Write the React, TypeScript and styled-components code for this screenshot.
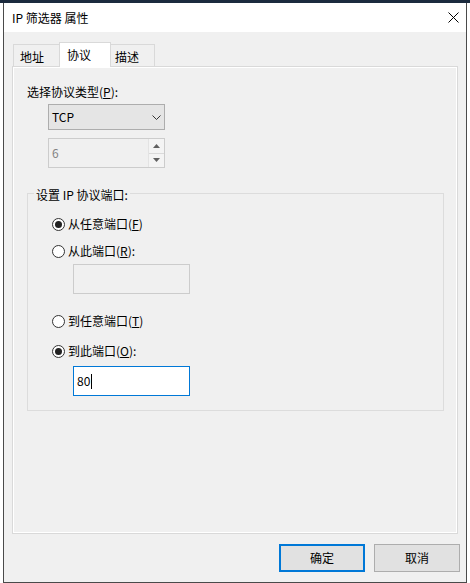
import React from 'react';
import styled, { createGlobalStyle } from 'styled-components';

const GlobalStyle = createGlobalStyle`
	html, body {
		margin: 0;
		padding: 0;
		background: #fff;
	}
	body {
		font-family: "Noto Sans CJK SC", "Noto Sans", sans-serif;
		font-size: 12px;
		color: #000;
	}
	* {
		box-sizing: border-box;
	}
`;

const Desktop = styled.div`
	width: 470px;
	height: 583px;
	overflow: hidden;
	display: flex;
	background: #fff;
	border-top: 3px solid #1b2a3e;
	padding-left: 3px;
`;

const Dialog = styled.div`
	width: 464px;
	height: 580px;
	display: flex;
	flex-direction: column;
	border: 1px solid #4a4a4a;
	border-top: none;
	background: #f0f0f0;
`;

const TitleBar = styled.div`
	height: 29px;
	flex-shrink: 0;
	display: flex;
	align-items: center;
	justify-content: space-between;
	padding-left: 8px;
	background: #fff;
	line-height: 16px;
`;

const CloseButton = styled.div`
	width: 26px;
	height: 29px;
	display: flex;
	align-items: center;
	justify-content: center;
`;

const Body = styled.div`
	flex: 1;
	display: flex;
	flex-direction: column;
	padding: 10px 0 0;
`;

const TabArea = styled.div`
	padding: 0 8px;
	display: flex;
	flex-direction: column;
`;

const TabStrip = styled.div`
	height: 25px;
	margin-bottom: -1px;
	padding-left: 1px;
	display: flex;
	align-items: flex-end;
	position: relative;
	z-index: 1;
`;

const Tab = styled.div<{
	$active?: boolean;
	$width: number;
	$pl: number;
	$hideLeft?: boolean;
	$hideRight?: boolean;
}>`
	width: ${(p) => p.$width}px;
	height: ${(p) => (p.$active ? 25 : 22)}px;
	margin-bottom: ${(p) => (p.$active ? 0 : 1)}px;
	padding-left: ${(p) => p.$pl}px;
	padding-top: ${(p) => (p.$active ? 0 : 2)}px;
	display: flex;
	align-items: center;
	line-height: 16px;
	background: ${(p) => (p.$active ? '#fff' : '#f0f0f0')};
	border: 1px solid #d9d9d9;
	border-bottom: none;
	${(p) => (p.$hideLeft ? 'border-left: none;' : '')}
	${(p) => (p.$hideRight ? 'border-right: none;' : '')}
`;

const Panel = styled.div`
	height: 468px;
	border: 1px solid #d9d9d9;
	box-shadow: inset 0 0 0 1px #fff;
	background: #f0f0f0;
	padding: 17px 13px 0 14px;
	display: flex;
	flex-direction: column;
	align-items: flex-start;
`;

const FieldLabel = styled.div`
	line-height: 16px;
	height: 16px;
`;

const Select = styled.div`
	margin: 4px 0 0 21px;
	width: 117px;
	height: 26px;
	border: 1px solid #adadad;
	background: #e5e5e5;
	display: flex;
	align-items: center;
	justify-content: space-between;
	padding: 0 3px;
	line-height: 16px;
`;

const Spinner = styled.div`
	margin: 8px 0 0 21px;
	width: 117px;
	height: 30px;
	border: 1px solid #cccccc;
	background: #f0f0f0;
	display: flex;
	align-items: stretch;
	justify-content: space-between;
	padding-left: 3px;
	color: #838383;
	line-height: 16px;
`;

const SpinValue = styled.span`
	display: flex;
	align-items: center;
`;

const SpinButtons = styled.div`
	width: 16px;
	display: flex;
	flex-direction: column;
	border-left: 1px solid #e3e3e3;
`;

const SpinButton = styled.div<{ $top?: boolean }>`
	flex: 1;
	display: flex;
	align-items: center;
	justify-content: center;
	background: #f4f4f4;
	${(p) => (p.$top ? 'border-bottom: 1px solid #dadada;' : '')}
`;

const GroupBox = styled.fieldset`
	align-self: stretch;
	margin: 15px 0 0;
	padding: 0 0 14px 0;
	border: 1px solid #dcdcdc;
	min-width: 0;
`;

const Legend = styled.legend`
	margin-left: 6px;
	padding: 4px 2px 0;
	line-height: 16px;
`;

const GroupBody = styled.div`
	margin-top: 13px;
	padding-left: 24px;
	display: flex;
	flex-direction: column;
	align-items: flex-start;
`;

const RadioRow = styled.div<{ $mt: number }>`
	margin-top: ${(p) => p.$mt}px;
	height: 16px;
	display: flex;
	align-items: center;
	gap: 3px;
	line-height: 16px;
`;

const RadioCircle = styled.span<{ $checked?: boolean }>`
	width: 13px;
	height: 13px;
	border: 1px solid #333;
	border-radius: 50%;
	background: #fff;
	display: flex;
	align-items: center;
	justify-content: center;

	&::after {
		content: '';
		width: 7px;
		height: 7px;
		border-radius: 50%;
		background: ${(p) => (p.$checked ? '#222' : 'transparent')};
	}
`;

const PortInput = styled.div<{ $mt: number; $active?: boolean }>`
	margin: ${(p) => p.$mt}px 0 0 21px;
	width: 117px;
	height: 30px;
	border: 1px solid ${(p) => (p.$active ? '#0078d7' : '#cccccc')};
	background: ${(p) => (p.$active ? '#fff' : '#f0f0f0')};
	display: flex;
	align-items: center;
	padding-left: 3px;
	line-height: 16px;
`;

const Caret = styled.span`
	width: 1px;
	height: 15px;
	background: #000;
	margin-left: 1px;
`;

const ButtonRow = styled.div`
	margin-top: 10px;
	padding-right: 6px;
	display: flex;
	justify-content: flex-end;
	gap: 9px;
`;

const DialogButton = styled.div<{ $default?: boolean }>`
	width: 86px;
	height: 28px;
	display: flex;
	align-items: center;
	justify-content: center;
	background: #e1e1e1;
	border: ${(p) => (p.$default ? '2px solid #0078d7' : '1px solid #adadad')};
	line-height: 16px;
`;

const Chevron = () => (
	<svg width="9" height="5" viewBox="0 0 9 5">
		<path d="M0.5 0.5 L4.5 4.5 L8.5 0.5" fill="none" stroke="#333" strokeWidth="1" />
	</svg>
);

const Arrow = ({ up }: { up?: boolean }) => (
	<svg width="7" height="4" viewBox="0 0 7 4">
		<path d={up ? 'M0 4 L3.5 0 L7 4 Z' : 'M0 0 L3.5 4 L7 0 Z'} fill="#606060" />
	</svg>
);

const Radio = ({ checked, mt, children }: { checked?: boolean; mt: number; children: React.ReactNode }) => (
	<RadioRow $mt={mt}>
		<RadioCircle $checked={checked} />
		<span>{children}</span>
	</RadioRow>
);

export default function App() {
	return (
		<>
			<GlobalStyle />
			<Desktop>
				<Dialog>
					<TitleBar>
						<span>IP 筛选器 属性</span>
						<CloseButton>
							<svg width="11" height="11" viewBox="0 0 11 11">
								<path d="M0.5 0.5 L10.5 10.5 M10.5 0.5 L0.5 10.5" stroke="#000" strokeWidth="1" />
							</svg>
						</CloseButton>
					</TitleBar>
					<Body>
						<TabArea>
							<TabStrip>
								<Tab $width={46} $pl={6} $hideRight>
									地址
								</Tab>
								<Tab $width={52} $pl={7} $active>
									协议
								</Tab>
								<Tab $width={44} $pl={4} $hideLeft>
									描述
								</Tab>
							</TabStrip>
							<Panel>
								<FieldLabel>
									选择协议类型(<u>P</u>):
								</FieldLabel>
								<Select>
									<span>TCP</span>
									<Chevron />
								</Select>
								<Spinner>
									<SpinValue>6</SpinValue>
									<SpinButtons>
										<SpinButton $top>
											<Arrow up />
										</SpinButton>
										<SpinButton>
											<Arrow />
										</SpinButton>
									</SpinButtons>
								</Spinner>
								<GroupBox>
									<Legend>设置 IP 协议端口:</Legend>
									<GroupBody>
										<Radio checked mt={0}>
											从任意端口(<u>F</u>)
										</Radio>
										<Radio mt={11}>
											从此端口(<u>R</u>):
										</Radio>
										<PortInput $mt={5} />
										<Radio mt={19}>
											到任意端口(<u>T</u>)
										</Radio>
										<Radio checked mt={14}>
											到此端口(<u>O</u>):
										</Radio>
										<PortInput $mt={7} $active>
											80
											<Caret />
										</PortInput>
									</GroupBody>
								</GroupBox>
							</Panel>
						</TabArea>
						<ButtonRow>
							<DialogButton $default>确定</DialogButton>
							<DialogButton>取消</DialogButton>
						</ButtonRow>
					</Body>
				</Dialog>
			</Desktop>
		</>
	);
}
